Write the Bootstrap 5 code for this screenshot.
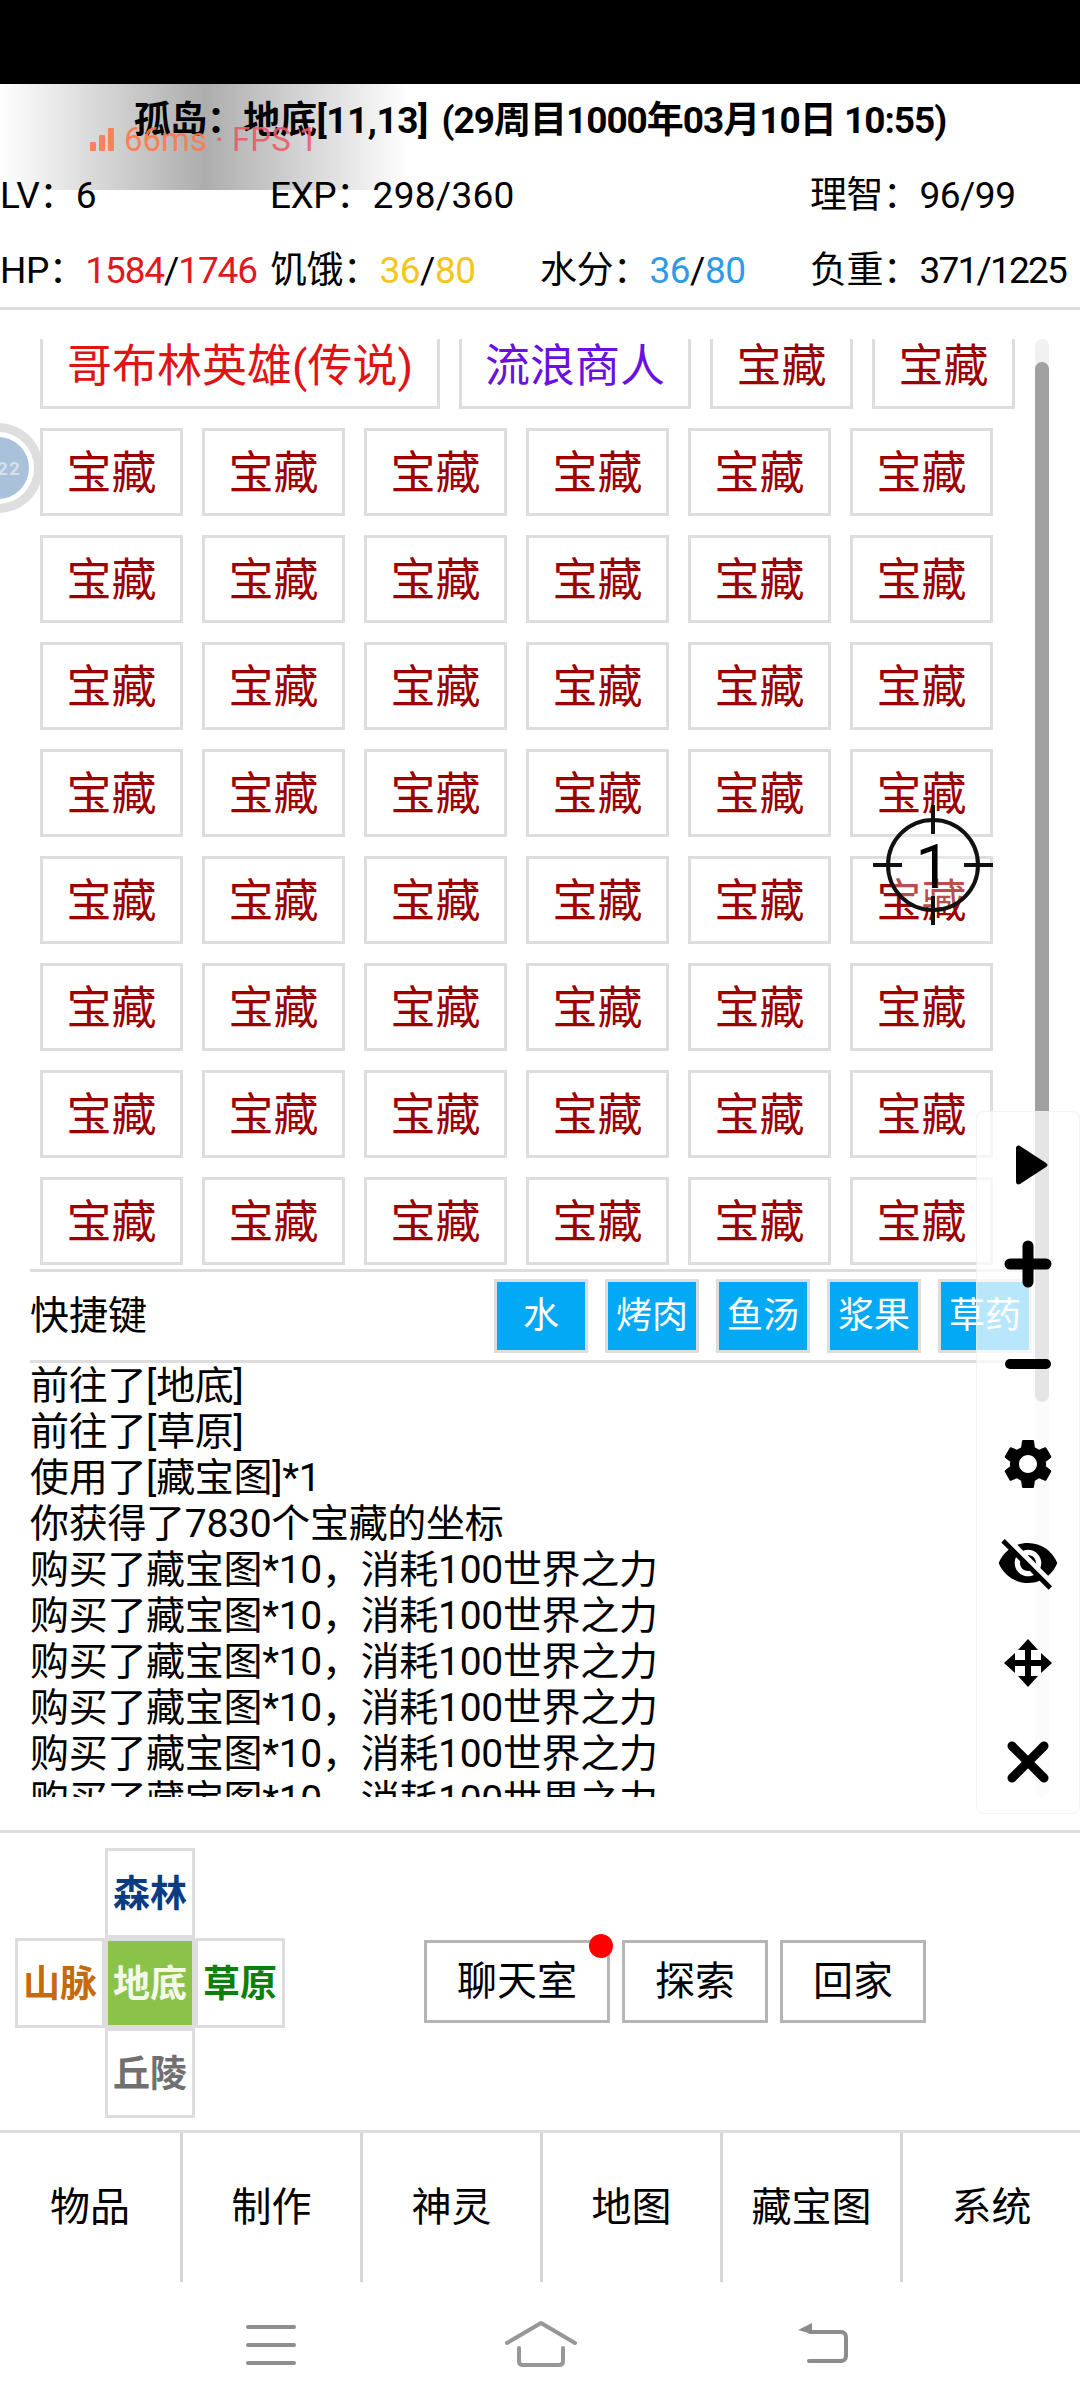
<!DOCTYPE html>
<html lang="zh-CN">
<head>
    <meta charset="UTF-8">
    <meta name="viewport" content="width=device-width, initial-scale=1.0">
    <title>孤岛</title>
    <link href="https://cdn.jsdelivr.net/npm/bootstrap@5.3.2/dist/css/bootstrap.min.css" rel="stylesheet">
    <style>
        body {
            width: 1080px;
            height: 2408px;
            overflow: hidden;
            position: relative;
            background: #fff;
            color: #000;
            font-family: Roboto, "Noto Sans CJK SC", sans-serif;
            font-size: 40px;
            line-height: 46px;
        }
        .status-bar { height: 84px; background: #000; }
        .title-line { height: 73px; font-size: 37px; font-weight: 700; letter-spacing: -.45px; white-space: nowrap; }
        .title-time { margin-left: 5px; letter-spacing: -1px; }
        .stat-line { height: 75px; padding-top: 3px; font-size: 37px; letter-spacing: -.5px; }
        .stat-line > div { white-space: nowrap; }
        .c-hp { color: #e0191f; }
        .c-food { color: #f5c51c; }
        .c-water { color: #2f9be3; }
        .num-wide { letter-spacing: .3px; }
        .num-tight { letter-spacing: -1.1px; }
        .num-tighter { letter-spacing: -1.8px; }
        .head-rule { height: 78px; border-bottom: 3px solid #ddd; margin-bottom: 29px; }

        .scroll-wrap { height: 1458px; }
        .scroll-main { width: 1035px; padding-left: 30px; overflow: hidden; }
        .scroll-track { width: 14px; background: #f1f1f1; border-radius: 7px; padding-top: 23px; }
        .scroll-thumb { height: 1040px; background: #a0a0a0; border-radius: 7px; }

        .treasure-box { width: 995px; padding-left: 10px; margin-top: -18px; gap: 19px; height: 948px; }
        .loot {
            height: 88px;
            min-width: 143px;
            padding: 2px 23px 0;
            border: 3px solid #ddd;
            border-radius: 0;
            background: #fff;
            color: #9c0000;
            font-size: 45px;
            line-height: 1;
            white-space: nowrap;
        }
        .loot-hero { color: #e01414; padding: 2px 24px 0; }
        .loot-trader { color: #6a10e0; }

        .quick-row {
            width: 1002px;
            height: 94px;
            border-top: 3px solid #ddd;
            border-bottom: 3px solid #ddd;
        }
        .quick-label { font-size: 39px; }
        .quick-list { gap: 17px; }
        .quick-btn {
            width: 94px;
            height: 74px;
            padding: 0;
            border: 3px solid #ddd;
            border-radius: 0;
            background: #03a9f4;
            color: #fff;
            font-size: 36px;
            line-height: 1;
            white-space: nowrap;
        }
        .log-box { font-size: 39px; letter-spacing: -.3px; white-space: nowrap; }

        .rule-top { border-top: 3px solid #ddd; margin-top: 33px; }
        .pad-area { height: 300px; padding-top: 3px; }
        .dir-grid { display: grid; grid-template-columns: repeat(3, 90px); grid-template-rows: repeat(3, 90px); margin-left: 15px; }
        .dir-cell {
            border: 3px solid #ddd;
            padding-top: 3px;
            font-size: 37px;
            font-weight: 700;
            line-height: 1;
        }
        .dir-n { grid-column: 2; grid-row: 1; color: #0a3c82; }
        .dir-w { grid-column: 1; grid-row: 2; color: #c56b0f; }
        .dir-c { grid-column: 2; grid-row: 2; color: #f4f9ea; background: #8bc34a; }
        .dir-e { grid-column: 3; grid-row: 2; color: #0d7f0d; }
        .dir-s { grid-column: 2; grid-row: 3; color: #707070; }
        .act-group { margin: -3px 0 0 139px; gap: 12px; }
        .act-btn {
            width: 146px;
            height: 83px;
            padding: 0;
            border: 3px solid #b5b5b5;
            border-radius: 0;
            background: #fff;
            color: #000;
            font-size: 40px;
            line-height: 1;
        }
        .act-wide { width: 186px; position: relative; }
        .red-dot {
            position: absolute;
            top: -9px;
            right: -6px;
            width: 24px;
            height: 24px;
            border-radius: 50%;
            background: #f00;
        }

        .tab-bar { border-top: 3px solid #ddd; height: 152px; }
        .tab-item { width: 180px; height: 149px; border-left: 3px solid #d6d6d6; }
        .tab-item:first-child { border-left: 0; }

        .nav-keys { height: 126px; padding: 42px 0 0 246px; }
        .nav-keys svg { display: block; }
        .key-home { margin: -4px 0 0 208px; }
        .key-back { margin: -4px 0 0 217px; }

        /* things lying over the page */
        .fps-shade {
            position: absolute;
            left: 0;
            top: 84px;
            width: 410px;
            height: 106px;
            background: linear-gradient(90deg, rgba(170,170,170,0) 0%, #adadad 50%, rgba(170,170,170,0) 100%);
            z-index: -1;
        }
        .fps-text {
            position: absolute;
            left: 90px;
            top: 120px;
            font-size: 33px;
            line-height: 40px;
            white-space: nowrap;
            opacity: .9;
        }
        .fps-ms { color: #ff7a4d; }
        .fps-num { color: #ef5a66; }
        .float-ball { position: absolute; left: -47px; top: 423px; }
        .aim-mark { position: absolute; left: 873px; top: 805px; width: 120px; height: 120px; }
        .tool-panel {
            position: absolute;
            left: 976px;
            top: 1111px;
            width: 104px;
            height: 703px;
            padding-top: 3px;
            background: rgba(255,255,255,.72);
            border: 1px solid rgba(235,235,235,.6);
            border-radius: 8px;
        }
        .tool-slot { height: 99.6px; }
    </style>
</head>
<body>
    <div class="status-bar"></div>

    <div class="title-line d-flex align-items-center justify-content-center"><span>孤岛：地底[11,13]&nbsp;</span><span class="title-time">(29周目1000年03月10日 10:55)</span></div>
    <div class="stat-line row g-0 align-items-center">
        <div class="col-3">LV：6</div>
        <div class="col-3">EXP：<span class="num-wide">298/360</span></div>
        <div class="col-3"></div>
        <div class="col-3">理智：96/99</div>
    </div>
    <div class="stat-line row g-0 align-items-center head-rule">
        <div class="col-3">HP：<span class="num-tight"><span class="c-hp">1584</span>/<span class="c-hp">1746</span></span></div>
        <div class="col-3">饥饿：<span class="c-food">36</span>/<span class="c-food">80</span></div>
        <div class="col-3">水分：<span class="c-water">36</span>/<span class="c-water">80</span></div>
        <div class="col-3">负重：<span class="num-tighter">371/1225</span></div>
    </div>

    <div class="scroll-wrap d-flex">
        <div class="scroll-main">
            <div id="treasure-list" class="treasure-box d-flex flex-wrap align-content-start">
                <button class="btn loot loot-hero">哥布林英雄(传说)</button>
                <button class="btn loot loot-trader">流浪商人</button>
            </div>
            <div class="quick-row d-flex align-items-center justify-content-between">
                <span class="quick-label">快捷键</span>
                <div class="quick-list d-flex">
                    <button class="btn quick-btn">水</button>
                    <button class="btn quick-btn">烤肉</button>
                    <button class="btn quick-btn">鱼汤</button>
                    <button class="btn quick-btn">浆果</button>
                    <button class="btn quick-btn">草药</button>
                </div>
            </div>
            <div id="log-list" class="log-box"></div>
        </div>
        <div class="scroll-track"><div class="scroll-thumb"></div></div>
    </div>

    <div class="rule-top pad-area d-flex align-items-center">
        <div class="dir-grid">
            <div class="dir-cell dir-n d-flex align-items-center justify-content-center">森林</div>
            <div class="dir-cell dir-w d-flex align-items-center justify-content-center">山脉</div>
            <div class="dir-cell dir-c d-flex align-items-center justify-content-center">地底</div>
            <div class="dir-cell dir-e d-flex align-items-center justify-content-center">草原</div>
            <div class="dir-cell dir-s d-flex align-items-center justify-content-center">丘陵</div>
        </div>
        <div class="act-group d-flex">
            <button class="btn act-btn act-wide">聊天室<span class="red-dot"></span></button>
            <button class="btn act-btn">探索</button>
            <button class="btn act-btn">回家</button>
        </div>
    </div>

    <div class="tab-bar d-flex">
        <div class="tab-item d-flex align-items-center justify-content-center">物品</div>
        <div class="tab-item d-flex align-items-center justify-content-center">制作</div>
        <div class="tab-item d-flex align-items-center justify-content-center">神灵</div>
        <div class="tab-item d-flex align-items-center justify-content-center">地图</div>
        <div class="tab-item d-flex align-items-center justify-content-center">藏宝图</div>
        <div class="tab-item d-flex align-items-center justify-content-center">系统</div>
    </div>

    <div class="nav-keys d-flex align-items-start">
        <svg width="50" height="44" viewBox="0 0 50 44" fill="none" stroke="#8e8e8e" stroke-width="4" stroke-linecap="round">
            <path d="M2 3h46M2 21h46M2 39h46"/>
        </svg>
        <svg class="key-home" width="74" height="48" viewBox="0 0 74 48" fill="none" stroke="#979797" stroke-width="4" stroke-linecap="round" stroke-linejoin="round">
            <path d="M3 23L37 3l34 20"/>
            <path d="M15 28v13c0 2.500 1.500 4 4 4h36c2.500 0 4-1.500 4-4V28"/>
        </svg>
        <svg class="key-back" width="56" height="48" viewBox="0 0 56 48" fill="none">
            <path d="M15 12h31c3 0 5 2 5 5v19c0 3-2 5-5 5H14" stroke="#8c8c8c" stroke-width="4" stroke-linecap="round"/>
            <path d="M17 3v11L3 10z" fill="#8c8c8c"/>
        </svg>
    </div>

    <div class="fps-shade"></div>
    <div class="fps-text d-flex align-items-center">
        <svg width="26" height="26" viewBox="0 0 26 26" fill="#ff7a4d" class="me-2"><rect x="0" y="15" width="6" height="9" rx="1"/><rect x="9" y="8" width="6" height="16" rx="1"/><rect x="18" y="1" width="6" height="23" rx="1"/></svg>
        <span class="fps-ms">66ms</span><span class="fps-num">&nbsp;·&nbsp;FPS 1</span>
    </div>

    <svg class="float-ball" width="90" height="90" viewBox="0 0 90 90">
        <circle cx="45" cy="45" r="45" fill="#d8d8d8" fill-opacity=".85"/>
        <circle cx="45" cy="45" r="36" fill="#fff"/>
        <circle cx="45" cy="45" r="31" fill="#a9c1da"/>
        <text x="44" y="52" font-family="Roboto, sans-serif" font-size="19" font-weight="700" fill="#d5e0ec" letter-spacing="1">22</text>
    </svg>

    <svg class="aim-mark" viewBox="0 0 120 120">
        <circle cx="60" cy="60" r="45" fill="rgba(255,255,255,.3)" stroke="#111" stroke-width="4"/>
        <path d="M60 0v29M60 91v29M0 60h29M91 60h29" stroke="#111" stroke-width="4"/>
        <text x="60" y="83" text-anchor="middle" font-family="Roboto, sans-serif" font-size="62" fill="#000">1</text>
    </svg>

    <div class="tool-panel d-flex flex-column">
        <div class="tool-slot d-flex align-items-center justify-content-center">
            <svg width="50" height="50" viewBox="0 0 50 50"><path d="M13 8c0-2 2-3 4-2l26 17c2 1 2 3 0 4L17 44c-2 1-4 0-4-2z" fill="#000"/></svg>
        </div>
        <div class="tool-slot d-flex align-items-center justify-content-center">
            <svg width="50" height="50" viewBox="0 0 50 50" stroke="#000" stroke-width="11" stroke-linecap="round"><path d="M25 7v36M7 25h36"/></svg>
        </div>
        <div class="tool-slot d-flex align-items-center justify-content-center">
            <svg width="50" height="50" viewBox="0 0 50 50" stroke="#000" stroke-width="10" stroke-linecap="round"><path d="M7 25h36"/></svg>
        </div>
        <div class="tool-slot d-flex align-items-center justify-content-center">
            <svg width="60" height="60" viewBox="0 0 24 24" fill="#000"><path d="M19.140 12.940c.04-.3.06-.61.06-.94 0-.32-.02-.64-.07-.94l2.030-1.580c.18-.14.23-.41.12-.61l-1.920-3.320c-.12-.22-.37-.29-.59-.22l-2.390.96c-.5-.38-1.030-.7-1.620-.94l-.36-2.540c-.04-.24-.24-.41-.48-.41h-3.840c-.24 0-.43.17-.47.41l-.36 2.540c-.59.24-1.130.57-1.620.94l-2.390-.96c-.22-.08-.47 0-.59.22L2.740 8.870c-.12.21-.08.47.12.61l2.030 1.580c-.05.3-.09.63-.09.94s.02.64.07.94l-2.030 1.580c-.18.14-.23.41-.12.61l1.920 3.320c.12.22.37.29.59.22l2.390-.96c.5.38 1.030.7 1.620.94l.36 2.540c.05.24.24.41.48.41h3.840c.24 0 .44-.17.47-.41l.36-2.540c.59-.24 1.130-.56 1.620-.94l2.390.96c.22.08.47 0 .59-.22l1.920-3.320c.12-.22.07-.47-.12-.61l-2.010-1.580zM12 15.600c-1.980 0-3.600-1.620-3.600-3.600s1.620-3.600 3.600-3.600 3.600 1.620 3.600 3.600-1.620 3.600-3.600 3.600z"/></svg>
        </div>
        <div class="tool-slot d-flex align-items-center justify-content-center">
            <svg width="64" height="64" viewBox="0 0 24 24" fill="#000"><path d="M12 7c2.760 0 5 2.240 5 5 0 .65-.13 1.260-.36 1.830l2.920 2.920c1.510-1.260 2.700-2.890 3.430-4.750-1.730-4.390-6-7.500-11-7.500-1.400 0-2.740.25-3.980.7l2.160 2.160C10.740 7.130 11.350 7 12 7zM2 4.270l2.280 2.280.46.46C3.080 8.300 1.780 10.020 1 12c1.730 4.390 6 7.500 11 7.500 1.550 0 3.030-.3 4.380-.84l.42.42L19.730 22 21 20.730 3.270 3 2 4.270zM7.530 9.800l1.550 1.550c-.05.21-.08.43-.08.65 0 1.660 1.340 3 3 3 .22 0 .44-.03.65-.08l1.550 1.550c-.67.33-1.410.53-2.200.53-2.760 0-5-2.240-5-5 0-.79.2-1.530.53-2.200zm4.310-.78l3.150 3.150.02-.16c0-1.660-1.340-3-3-3l-.17.01z"/></svg>
        </div>
        <div class="tool-slot d-flex align-items-center justify-content-center">
            <svg width="50" height="50" viewBox="0 0 50 50" fill="#000">
                <path d="M25 8v34M8 25h34" stroke="#000" stroke-width="6"/>
                <path d="M25 1l10 11H15zM25 49L15 38h20zM1 25l11-10v20zM49 25L38 35V15z"/>
            </svg>
        </div>
        <div class="tool-slot d-flex align-items-center justify-content-center">
            <svg width="50" height="50" viewBox="0 0 50 50" stroke="#000" stroke-width="9" stroke-linecap="round"><path d="M9 9l32 32M41 9L9 41"/></svg>
        </div>
    </div>

    <script src="https://cdn.jsdelivr.net/npm/bootstrap@5.3.2/dist/js/bootstrap.bundle.min.js"></script>
    <script>
        // 宝藏按钮
        const treasureList = document.getElementById('treasure-list');
        for (let i = 0; i < 50; i++) {
            const b = document.createElement('button');
            b.className = 'btn loot';
            b.textContent = '宝藏';
            treasureList.appendChild(b);
        }

        // 日志
        const logList = document.getElementById('log-list');
        const lines = ['前往了[地底]', '前往了[草原]', '使用了[藏宝图]*1', '你获得了7830个宝藏的坐标'];
        for (let i = 0; i < 6; i++) lines.push('购买了藏宝图*10，消耗100世界之力');
        lines.forEach(t => {
            const d = document.createElement('div');
            d.textContent = t;
            logList.appendChild(d);
        });
    </script>
</body>
</html>
